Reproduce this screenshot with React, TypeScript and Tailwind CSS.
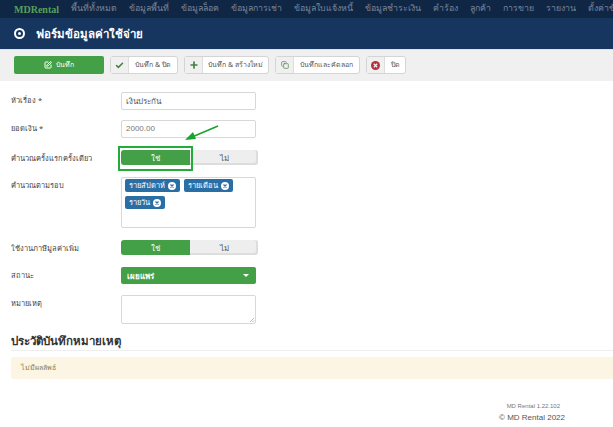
import React from "react";
import { Check, Copy, Plus, SquarePen } from "lucide-react";

const thai = "font-['Noto_Sans','Noto_Sans_CJK_SC',sans-serif]";
const navItems = [
  "พื้นที่ทั้งหมด",
  "ข้อมูลพื้นที่",
  "ข้อมูลล็อค",
  "ข้อมูลการเช่า",
  "ข้อมูลใบแจ้งหนี้",
  "ข้อมูลชำระเงิน",
  "คำร้อง",
  "ลูกค้า",
  "การขาย",
  "รายงาน",
  "ตั้งค่าข้อมูล",
];

// filled circle with a cut-out cross, used by the tags and the close button
const RoundX = ({ size, fill, cross }: { size: number; fill: string; cross: string }) => (
  <svg width={size} height={size} viewBox="0 0 16 16" className="shrink-0">
    <circle cx="8" cy="8" r="8" fill={fill} />
    <path d="M5 5 L11 11 M11 5 L5 11" stroke={cross} strokeWidth="2.4" />
  </svg>
);

const ToolButton = ({
  icon,
  label,
  width,
}: {
  icon: React.ReactNode;
  label: string;
  width: string;
}) => (
  <div className={`flex h-[18px] items-center rounded-[3px] border border-[#d4d4d4] bg-white ${width}`}>
    <span className="flex h-full w-[18px] shrink-0 items-center justify-center border-r border-[#dddddd] bg-[#f0f0f0]">
      {icon}
    </span>
    <span className="flex-1 text-center text-[7px] whitespace-nowrap text-[#555555]">{label}</span>
  </div>
);

const Row = ({
  label,
  children,
  className,
}: {
  label: string;
  children: React.ReactNode;
  className: string;
}) => (
  <div className={`flex ${className}`}>
    <label className="w-[121px] shrink-0 pl-[11px] text-[7.5px] leading-[17px] text-[#444444]">{label}</label>
    {children}
  </div>
);

const Toggle = () => (
  <div className="flex h-[15px] w-[137px] overflow-hidden rounded-[3px] bg-[#eeeeee] text-[8px] shadow-[inset_-1px_-1px_0_1px_#dddddd]">
    <span className="flex w-[69px] items-center justify-center bg-[#43a047] text-white">ใช่</span>
    <span className="flex flex-1 items-center justify-center text-[#555555]">ไม่</span>
  </div>
);

const Tag = ({ label }: { label: string }) => (
  <span className="flex h-[13px] items-center gap-[3px] rounded-[2px] bg-[#2a6ea6] px-[4px] text-[7.5px] text-white">
    {label}
    <RoundX size={8} fill="#ffffff" cross="#2a6ea6" />
  </span>
);

export default function App() {
  return (
    <div className={`h-[427px] w-[613px] overflow-hidden bg-white ${thai}`}>
      {/* Nav */}
      <div className="flex h-[18px] items-center gap-[12px] overflow-hidden whitespace-nowrap bg-[#102645] pl-[14px] text-[8.8px] text-[#76859c]">
        <span className="font-['Liberation_Serif',serif] text-[10px] font-bold text-[#57a05a]">MDRental</span>
        {navItems.map((item) => (
          <span key={item}>{item}</span>
        ))}
      </div>

      {/* Title */}
      <div className="flex h-[31px] items-center gap-[11px] bg-[#17365f] pl-[14px] text-white">
        <span className="flex h-[11px] w-[11px] items-center justify-center rounded-full border-[2px] border-white">
          <span className="h-[3px] w-[3px] rounded-full bg-white" />
        </span>
        <h1 className="text-[11.5px] font-semibold">ฟอร์มข้อมูลค่าใช้จ่าย</h1>
      </div>

      {/* Toolbar */}
      <div className="flex h-[32px] items-start gap-[6px] border-t border-[#dfe3e8] bg-[#f0f0f0] pl-[14px] pt-[6px]">
        <div className="flex h-[18px] w-[90px] items-center justify-center gap-[4px] rounded-[2px] bg-[#43a047] text-[7px] text-white">
          <SquarePen size={8} strokeWidth={3} />
          บันทึก
        </div>
        <ToolButton width="w-[68px]" label="บันทึก & ปิด" icon={<Check size={9} strokeWidth={4} className="text-[#43813f]" />} />
        <ToolButton width="w-[85px]" label="บันทึก & สร้างใหม่" icon={<Plus size={10} strokeWidth={4} className="text-[#43813f]" />} />
        <ToolButton width="w-[85px]" label="บันทึกและคัดลอก" icon={<Copy size={8} className="text-[#43813f]" />} />
        <ToolButton width="w-[40px]" label="ปิด" icon={<RoundX size={9} fill="#b5303c" cross="#f0f0f0" />} />
      </div>

      {/* Form */}
      <div className="relative pt-[11px]">
        <Row label="หัวเรื่อง *" className="h-[18px]">
          <div className="flex h-[18px] w-[135px] items-center rounded-[2px] border border-[#d8d8d8] px-[4px] text-[8px] text-[#555555]">
            เงินประกัน
          </div>
        </Row>
        <Row label="ยอดเงิน *" className="mt-[10px] h-[18px]">
          <div className="flex h-[18px] w-[135px] items-center rounded-[2px] border border-[#d8d8d8] px-[4px] font-['Liberation_Sans',sans-serif] text-[8px] text-[#777777]">
            2000.00
          </div>
        </Row>
        <Row label="คำนวณครั้งแรกครั้งเดียว" className="mt-[12px] h-[15px]">
          <Toggle />
        </Row>
        <Row label="คำนวณตามรอบ" className="mt-[12px] h-[51px]">
          <div className="flex h-[51px] w-[135px] flex-wrap content-start gap-[4px] rounded-[2px] border border-[#d8d8d8] px-[3px] pt-[1px]">
            <Tag label="รายสัปดาห์" />
            <Tag label="รายเดือน" />
            <Tag label="รายวัน" />
          </div>
        </Row>
        <Row label="ใช้งานภาษีมูลค่าเพิ่ม" className="mt-[12px] h-[15px]">
          <Toggle />
        </Row>
        <Row label="สถานะ" className="mt-[12px] h-[17px]">
          <div className="flex h-[17px] w-[135px] items-center justify-between rounded-[2px] bg-[#43a047] pl-[6px] pr-[7px] text-[8px] font-semibold text-white">
            เผยแพร่
            <span className="h-0 w-0 border-x-[3px] border-t-[3px] border-x-transparent border-t-white" />
          </div>
        </Row>
        <Row label="หมายเหตุ" className="mt-[11px] h-[29px]">
          <div className="relative h-[29px] w-[135px] rounded-[2px] border border-[#d8d8d8]">
            <svg className="absolute bottom-0 right-0" width="6" height="6" viewBox="0 0 6 6">
              <path d="M1 5 L5 1 M3.5 5 L5 3.5" stroke="#999999" strokeWidth="0.7" />
            </svg>
          </div>
        </Row>

        {/* Highlight annotation */}
        <div className="absolute left-[118px] top-[65px] h-[25px] w-[75px] border-[2px] border-[#22ad38]" />
        <svg className="absolute left-[184px] top-[44px]" width="36" height="18" viewBox="0 0 36 18">
          <path d="M34 1 L8 12" stroke="#17a32e" strokeWidth="1.5" fill="none" />
          <path d="M1 15 L9 7 L12 14 Z" fill="#17a32e" />
        </svg>
      </div>

      {/* History */}
      <div className="mt-[8px] pl-[11px]">
        <h2 className="border-b border-[#eeeeee] text-[11.5px] leading-[18px] font-semibold text-[#333333]">
          ประวัติบันทึกหมายเหตุ
        </h2>
        <div className="mt-[6px] flex h-[22px] items-center rounded-l-[2px] bg-[#fdf5e3] pl-[10px] text-[7px] text-[#8a7a55]">
          ไม่มีผลลัพธ์
        </div>
      </div>

      {/* Footer */}
      <div className="mt-[23px] flex flex-col items-end pr-[48px] font-['Liberation_Sans',sans-serif] text-[#555555]">
        <span className="pr-[5px] text-[6px] leading-[9px] text-[#777777]">MD Rental 1.22.102</span>
        <span className="text-[8px] leading-[13px]">© MD Rental 2022</span>
      </div>
    </div>
  );
}
